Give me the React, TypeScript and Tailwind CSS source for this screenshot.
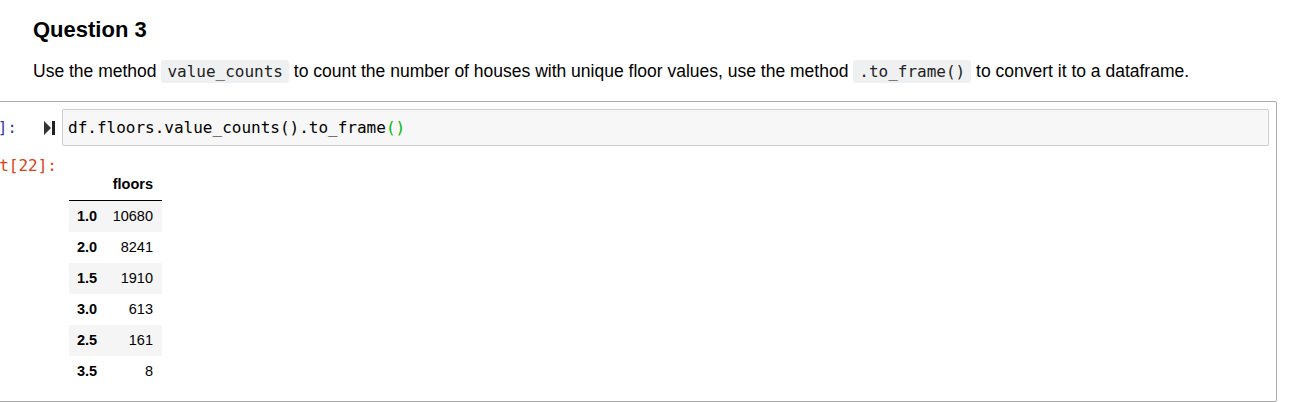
const rows = [
  { idx: "1.0", val: "10680" },
  { idx: "2.0", val: "8241" },
  { idx: "1.5", val: "1910" },
  { idx: "3.0", val: "613" },
  { idx: "2.5", val: "161" },
  { idx: "3.5", val: "8" },
];

const mono = "font-['DejaVu_Sans_Mono',monospace]";

const RunIcon = () => (
  <svg width="11" height="14" viewBox="0 0 11 14" className="shrink-0">
    <polygon points="0,0 7,7 0,14" fill="#333" />
    <rect x="8" y="0" width="3" height="14" fill="#222" />
  </svg>
);

const InlineCode = ({ children }: { children: string }) => (
  <code className={`${mono} text-[16px] bg-[#eff0f1] text-[#222] px-[6px] py-[2px] rounded-[3px]`}>
    {children}
  </code>
);

export default function App() {
  return (
    <div className="bg-white w-[1290px] h-[402px] overflow-hidden font-['Liberation_Sans',Arial,sans-serif] text-black">
      {/* markdown cell */}
      <div className="pl-[33px] pt-[19px]">
        <h3 className="text-[22px] leading-[22px] font-bold">Question 3</h3>
        <p className="mt-[18px] text-[17.5px] leading-[24px] whitespace-nowrap">
          Use the method <InlineCode>value_counts</InlineCode> to count the number of houses with unique floor
          values, use the method <InlineCode>.to_frame()</InlineCode> to convert it to a dataframe.
        </p>
      </div>

      {/* code cell */}
      <div className="mt-[17px] -ml-[80px] w-[1357px] border border-[#ababab] rounded-[2px] pt-[7px] pr-[7px] pb-[14px]">
        {/* input */}
        <div className="flex">
          <div className={`w-[134px] shrink-0 flex items-center justify-end pt-[8px] h-[29px] ${mono} text-[16px] leading-[21px] text-[#303F9F]`}>
            <span>In [22]:</span>
            <span className="ml-[27px]">
              <RunIcon />
            </span>
          </div>
          <div className={`ml-[7px] flex-1 border border-[#cfcfcf] bg-[#f7f7f7] rounded-[2px] px-[5px] py-[7px] ${mono} text-[16px] leading-[21px] whitespace-nowrap`}>
            df.floors.value_counts().to_frame<span className="text-[#00bb00]">()</span>
          </div>
        </div>

        {/* output */}
        <div className="flex">
          <div className={`w-[136px] shrink-0 pt-[9px] text-right ${mono} text-[16px] leading-[21px] text-[#D84315]`}>
            Out[22]:
          </div>
          <div className="ml-[12px] pt-[23px]">
            <table className="border-collapse text-[14.5px] leading-[17px]">
              <thead>
                <tr className="border-b border-black">
                  <th className="w-[36px] py-[7px]"></th>
                  <th className="w-[57px] py-[7px] pr-[9px] text-right font-bold">floors</th>
                </tr>
              </thead>
              <tbody>
                {rows.map((r, i) => (
                  <tr key={r.idx} className={i % 2 === 0 ? "bg-[#f5f5f5]" : "bg-white"}>
                    <th className="py-[7px] pl-[8px] text-left font-bold">{r.idx}</th>
                    <td className="py-[7px] pr-[9px] text-right">{r.val}</td>
                  </tr>
                ))}
              </tbody>
            </table>
          </div>
        </div>
      </div>
    </div>
  );
}
